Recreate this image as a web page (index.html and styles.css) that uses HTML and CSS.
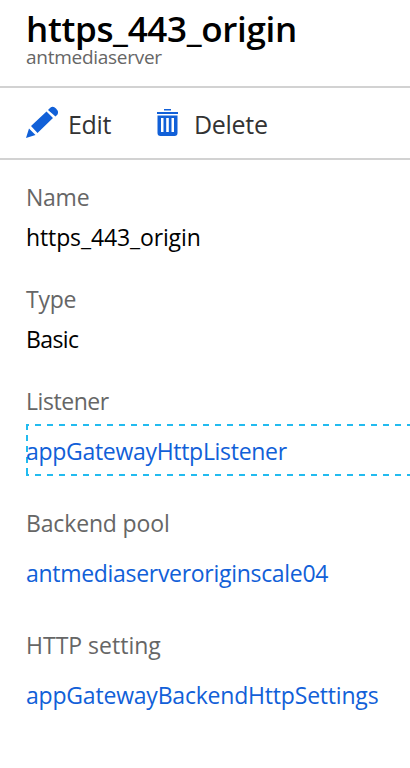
FILE: index.html
```
<!DOCTYPE html>
<html lang="en">
<head>
<meta charset="utf-8">
<title>https_443_origin</title>
<link rel="stylesheet" href="styles.css">
</head>
<body>
<header class="head">
<h1>https_443_origin</h1>
<p class="sub">antmediaserver</p>
</header>
<nav class="toolbar">
<button class="cmd edit"><svg width="34" height="34" viewBox="0 0 34 34" fill="#1160d8"><path d="M0 32 3 22.500 9.500 29zM5 20 20.500 5.500l6.500 6.500L11.500 27zM22 4l2-2q3-2.500 6 .5t1.500 6l-2 2z"/></svg><span>Edit</span></button>
<button class="cmd del"><svg width="24" height="28" viewBox="0 0 24 28"><path fill="#1160d8" fill-rule="evenodd" d="M8 0h7v1.500H8zM1 3h21v2H1zM1.500 6.500h20V24q0 3-3 3h-14q-3 0-3-3zM5 9v14h2.500V9zM10.200 9v14h2.600V9zM15.500 9v14H18V9z"/></svg><span>Delete</span></button>
</nav>
<main class="fields">
<section><h2 class="name">Name</h2><p class="value">https_443_origin</p></section>
<section><h2 class="name">Type</h2><p class="value basic">Basic</p></section>
<section class="linked"><h2 class="listener">Listener</h2><a class="focus">appGatewayHttpListener</a></section>
<section class="linked"><h2 class="pool">Backend pool</h2><a>antmediaserveroriginscale04</a></section>
<section class="linked"><h2>HTTP setting</h2><a class="setting">appGatewayBackendHttpSettings</a></section>
</main>
</body>
</html>
```
FILE: styles.css
```
* { box-sizing: border-box; margin: 0; padding: 0; }
body { width: 410px; height: 768px; overflow: hidden; background: #fff; color: #000; font-family: "Open Sans", "Noto Sans", sans-serif; }
.head { height: 88px; padding: 8px 0 0 26px; border-bottom: 2px solid #d2d2d2; }
h1 { font-size: 35px; line-height: 42px; font-weight: 600; letter-spacing: -.33px; }
.sub { font-size: 19px; line-height: 14px; letter-spacing: -.27px; color: #666; }
.toolbar { display: flex; height: 72px; padding-left: 26px; align-items: center; border-bottom: 2px solid #d2d2d2; }
.cmd { display: flex; align-items: center; border: 0; background: none; font: 25px "Open Sans", sans-serif; letter-spacing: -.3px; color: #333; }
.cmd span { padding-top: 2px; }
.edit { width: 130px; gap: 8px; }
.del { gap: 14px; }
.fields { padding: 17px 0 0 26px; }
section { height: 102px; }
h2 { font-size: 23px; line-height: 40px; font-weight: 400; color: #666; }
.value, a { font-size: 23px; line-height: 40px; }
.value { letter-spacing: -.12px; }
.value.basic { letter-spacing: -.6px; }
.name { letter-spacing: -.25px; }
.listener { letter-spacing: -.45px; }
.pool { letter-spacing: -.15px; }
.linked { height: 122px; }
a { display: block; height: 52px; margin-top: 3px; padding-top: 7px; letter-spacing: -.3px; color: #1160d8; }
a.setting { letter-spacing: -.2px; }
.focus {
  background:
    repeating-linear-gradient(90deg, #22bbef 0 6px, transparent 6px 12px) -3px 0 / 420px 2px no-repeat,
    repeating-linear-gradient(90deg, #22bbef 0 6px, transparent 6px 12px) -3px 100% / 420px 2px no-repeat,
    repeating-linear-gradient(#22bbef 0 6px, transparent 6px 11px) 0 0 / 2px 100% no-repeat;
}
```
